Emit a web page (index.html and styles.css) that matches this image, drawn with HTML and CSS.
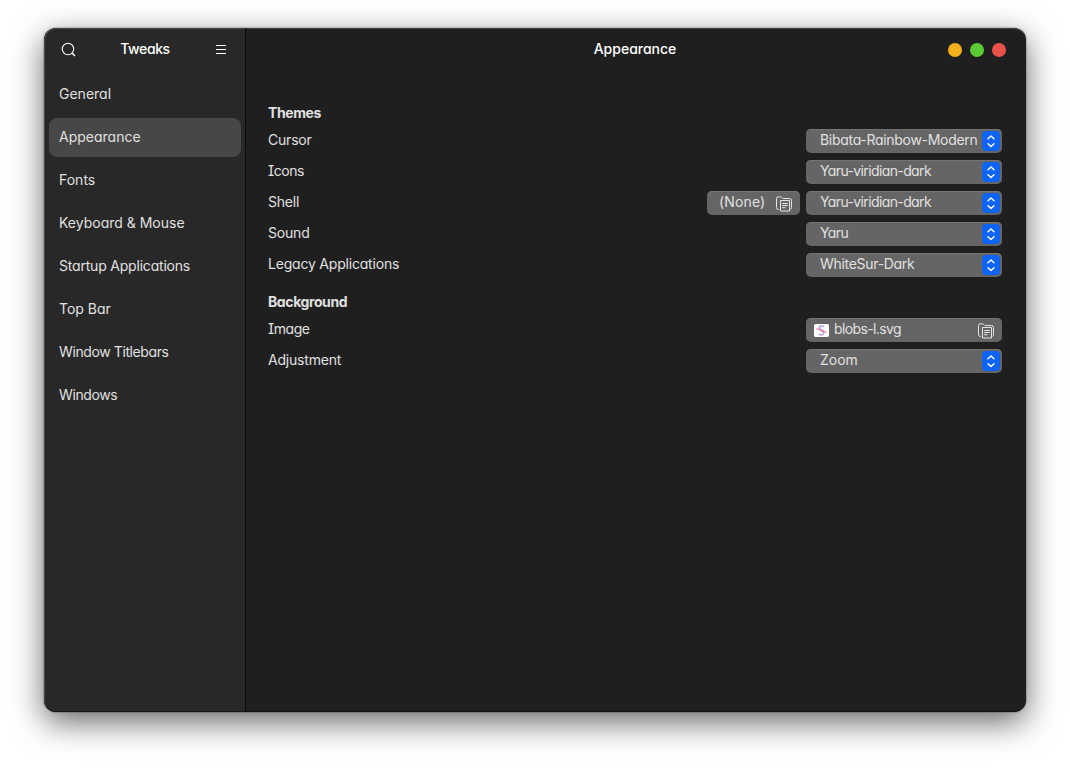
FILE: index.html
```html
<!DOCTYPE html>
<html lang="en">
<head>
    <meta charset="UTF-8">
    <meta name="viewport" content="width=device-width, initial-scale=1.0">
    <title>Tweaks</title>
    <link rel="stylesheet" href="styles.css">
</head>
<body>
    <!-- Shared icons -->
    <svg class="icon-defs" width="0" height="0">
        <symbol id="arrows" viewBox="0 0 18 20">
            <path d="M6 7.7 L9 4.9 L12 7.7 M6 12.7 L9 15.5 L12 12.7" fill="none" stroke="#fff" stroke-width="1.4" stroke-linecap="round" stroke-linejoin="round"/>
        </symbol>
        <symbol id="open" viewBox="0 0 16 16">
            <path d="M3 13.5 H2.5 Q.5 13.5 .5 11.5 V2.5 Q.5 .9 2 .9 H4.6 Q5.3 .9 5.8 1.5 L6.8 2.5 H13.5 Q15.5 2.5 15.5 4.5 V11.5 Q15.5 13.1 14.5 13.5" fill="none" stroke="#e4e4e4"/>
            <path d="M4.5 4.5 H13.5 V15 H4.5 Z M6.2 7.5 H11.8 M6.2 9.5 H11.8 M6.2 11.7 H9.5" fill="none" stroke="#e4e4e4"/>
        </symbol>
    </svg>

    <div class="window">
        <aside class="sidebar">
            <header class="sidebar-header">
                <svg class="icon" viewBox="0 0 16 16">
                    <circle cx="7" cy="7" r="5.7" fill="none" stroke="#fff" stroke-width="1.1"/>
                    <path d="M11.2 11.2 L14 14" stroke="#fff" stroke-width="1.5"/>
                </svg>
                <h1>Tweaks</h1>
                <svg class="icon" viewBox="0 0 16 16">
                    <path d="M3 3.5 H13 M3 7.5 H13 M3 11.5 H13" stroke="#fff" stroke-width="1"/>
                </svg>
            </header>
            <ul class="nav">
                <li>General</li>
                <li class="selected">Appearance</li>
                <li>Fonts</li>
                <li>Keyboard &amp; Mouse</li>
                <li class="tight">Startup Applications</li>
                <li>Top Bar</li>
                <li class="tighter">Window Titlebars</li>
                <li class="tighter">Windows</li>
            </ul>
        </aside>

        <main class="content">
            <header class="content-header">
                <h1>Appearance</h1>
                <div class="window-buttons">
                    <span class="minimize"></span>
                    <span class="maximize"></span>
                    <span class="close"></span>
                </div>
            </header>

            <section>
                <h2>Themes</h2>
                <div class="row">
                    <span class="label">Cursor</span>
                    <div class="select"><span>Bibata-Rainbow-Modern</span><svg class="arrows"><use href="#arrows"/></svg></div>
                </div>
                <div class="row">
                    <span class="label tighter">Icons</span>
                    <div class="select condensed"><span>Yaru-viridian-dark</span><svg class="arrows"><use href="#arrows"/></svg></div>
                </div>
                <div class="row">
                    <span class="label">Shell</span>
                    <div class="file none"><span>(None)</span><svg class="open"><use href="#open"/></svg></div>
                    <div class="select condensed"><span>Yaru-viridian-dark</span><svg class="arrows"><use href="#arrows"/></svg></div>
                </div>
                <div class="row">
                    <span class="label">Sound</span>
                    <div class="select condensed"><span>Yaru</span><svg class="arrows"><use href="#arrows"/></svg></div>
                </div>
                <div class="row">
                    <span class="label">Legacy Applications</span>
                    <div class="select"><span>WhiteSur-Dark</span><svg class="arrows"><use href="#arrows"/></svg></div>
                </div>
            </section>

            <section>
                <h2>Background</h2>
                <div class="row">
                    <span class="label tighter">Image</span>
                    <div class="file condensed">
                        <svg class="thumb" viewBox="0 0 14 12">
                            <rect width="14" height="12" rx="1.5" fill="#fff"/>
                            <path d="M9.5 2.2 Q5 1 5 3.4 Q5.2 5 7.5 5.8 Q9.6 7 9 8.8 Q8 10.8 4.5 9.8" fill="none" stroke="#b9a0ec" stroke-width="1.5"/>
                            <path d="M2.3 4.3 L5 5 L9 7.2 L11.8 7.4" fill="none" stroke="#ee6080" stroke-width="1"/>
                        </svg>
                        <span>blobs-l.svg</span>
                        <svg class="open"><use href="#open"/></svg>
                    </div>
                </div>
                <div class="row">
                    <span class="label">Adjustment</span>
                    <div class="select wide"><span>Zoom</span><svg class="arrows"><use href="#arrows"/></svg></div>
                </div>
            </section>
        </main>
    </div>
</body>
</html>
```

FILE: styles.css
```css
* {
    box-sizing: border-box;
}

body {
    margin: 0;
    padding: 28px 44px 60px;
    height: 772px;
    overflow: hidden;
    background: #fff;
    color: #e0e0e0;
    font-family: Inter, 'Noto Sans', sans-serif;
    font-size: 14px;
    line-height: 18px;
    /* single-storey a and serifed capital I */
    font-feature-settings: 'cv11', 'cv08';
}

h1, h2, ul {
    margin: 0;
    padding: 0;
}

.icon-defs {
    position: absolute;
}

.window {
    display: flex;
    height: 684px;
    border-radius: 12px;
    overflow: hidden;
    background: #1f1f1f;
    box-shadow: 0 0 2px rgba(0, 0, 0, 0.6), 0 10px 32px rgba(0, 0, 0, 0.6);
}

/* Sidebar */
.sidebar {
    width: 202px;
    background: #282828;
    border-right: 1px solid #0b0b0b;
    box-shadow: inset 1px 1px 0 #4a4a4a, inset 0 -1px 0 #161616;
    border-radius: 12px 0 0 12px;
}

.sidebar-header {
    display: flex;
    align-items: center;
    justify-content: space-between;
    height: 43px;
    padding: 0 16px 0 17px;
}

.icon {
    width: 16px;
    height: 16px;
}

h1 {
    font-size: 14px;
    font-weight: 500;
    color: #fff;
    padding-bottom: 2px;
}

.sidebar-header h1 {
    letter-spacing: -0.4px;
}

.nav {
    list-style: none;
    padding: 4px 4px 0 5px;
}

.nav li {
    height: 39px;
    margin-bottom: 4px;
    padding: 10px;
    border-radius: 8px;
}

.nav .selected {
    background: #474747;
}

.nav .tight {
    letter-spacing: -0.2px;
}

.nav .tighter {
    letter-spacing: -0.4px;
}

/* Content */
.content {
    flex: 1;
    padding: 0 24px 0 22px;
    box-shadow: inset 0 1px 0 #454545, inset 0 -1px 0 #101010;
    border-radius: 0 12px 12px 0;
}

.content-header {
    display: grid;
    grid-template-columns: 1fr auto 1fr;
    align-items: center;
    height: 43px;
    margin: 0 -4px 33px -4px;
}

.content-header h1 {
    grid-column: 2;
}

.window-buttons {
    display: flex;
    justify-content: flex-end;
    gap: 8px;
    padding-top: 1px;
}

.window-buttons span {
    width: 14px;
    height: 14px;
    border-radius: 50%;
}

.minimize {
    background: #f3b01c;
}

.maximize {
    background: #5bcb35;
}

.close {
    background: #e9524a;
}

section {
    margin-bottom: 16px;
}

h2 {
    font-size: 14px;
    font-weight: 700;
    letter-spacing: -0.4px;
    padding-bottom: 7px;
}

.row {
    display: flex;
    gap: 6px;
    height: 24px;
    margin-bottom: 7px;
}

.label {
    flex: 1;
    line-height: 22px;
    letter-spacing: -0.2px;
}

.label.tighter {
    letter-spacing: -0.45px;
}

.select,
.file {
    display: flex;
    align-items: center;
    width: 196px;
    border-radius: 5px;
    background: #656565;
    box-shadow: inset 0 1px 0 #747474;
    line-height: 20px;
    white-space: nowrap;
}

.select span,
.file span {
    flex: 1;
    height: 22px;
}

.select {
    padding: 0 2px 0 14px;
    letter-spacing: -0.3px;
}

.file {
    padding: 0 8px 0 8px;
}

.condensed {
    letter-spacing: -0.62px;
}

.select.wide {
    letter-spacing: 0;
}

.file.none {
    width: 93px;
    padding-left: 12px;
    letter-spacing: 0.15px;
}

.arrows {
    flex: none;
    width: 18px;
    height: 20px;
    border-radius: 4px;
    background: #0d64f6;
}

.open {
    width: 16px;
    height: 16px;
    margin-top: 1px;
}

.thumb {
    width: 15px;
    height: 13px;
    margin-right: 5px;
}
```
